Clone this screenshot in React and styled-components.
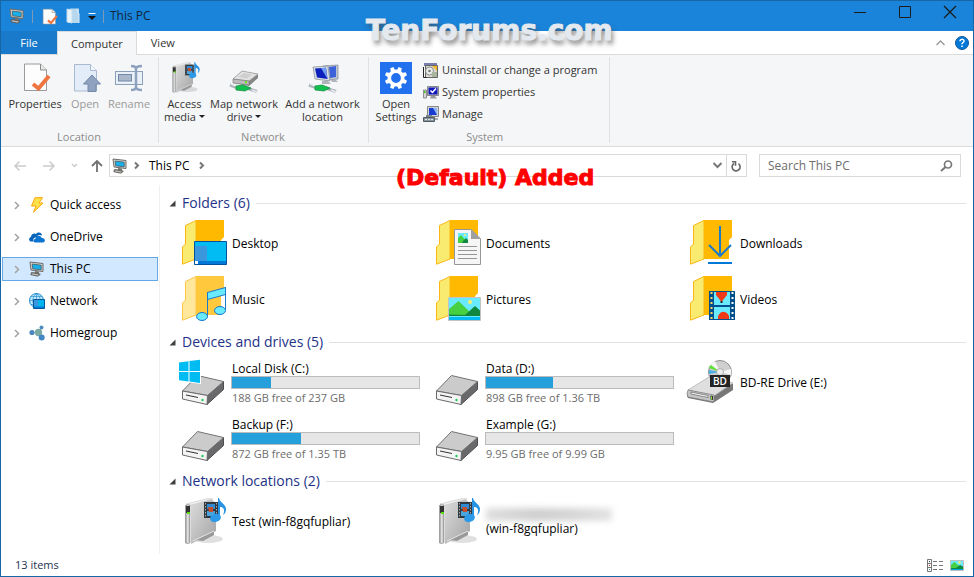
import React from "react";
import styled, { createGlobalStyle } from "styled-components";

const GlobalStyle = createGlobalStyle`
  * { box-sizing: border-box; }
  body { margin: 0; background: #fff; color: #000; font: 12px/16px "Open Sans", "Noto Sans", sans-serif; }
  button, input { font: inherit; color: inherit; background: none; border: 0; padding: 0; margin: 0; }
  a { color: inherit; text-decoration: none; }
  ul { list-style: none; margin: 0; padding: 0; }
  h1, h2 { margin: 0; font-weight: 400; }
  svg { display: block; flex: none; overflow: visible; }
`;

/* ---------- layout ---------- */

const Window = styled.div`
  position: relative;
  display: flex;
  flex-direction: column;
  min-height: 100vh;
  border: 1px solid #1766a6;
  background: #fff;
`;

const TitleBar = styled.header`
  display: flex;
  align-items: center;
  height: 30px;
  padding-left: 8px;
  background: #1a84da;
  color: #10263a;
`;

const QuickTools = styled.div`
  display: flex;
  align-items: center;
  gap: 7px;
`;

const IconButton = styled.button`
  display: grid;
  place-items: center;
  width: ${(p) => p.$w || 16}px;
  height: ${(p) => p.$h || 16}px;
  flex: none;
`;

const Divider = styled.span`
  width: 1px;
  height: 13px;
  background: #7d99b3;
`;

const WindowTitle = styled.h1`
  flex: 1;
  margin-left: 6px;
  font-size: 12px;
`;

const WindowControls = styled.div`
  display: flex;
  align-self: flex-start;
`;

const TabBar = styled.div`
  display: flex;
  height: 24px;
  font-size: 11px;
  border-bottom: 1px solid #dadbdc;
`;

const FileTab = styled.button`
  width: 56px;
  height: 23px;
  background: #1979ca;
  color: #fff;
`;

const Tab = styled.button`
  height: ${(p) => (p.$active ? 24 : 23)}px;
  padding: 0 13px;
  color: #333;
  border: 1px solid transparent;
  border-bottom: 0;
  ${(p) => p.$active && "background: #f5f6f7; border-color: #dadbdc;"}
`;

const TabTools = styled.div`
  display: flex;
  align-items: center;
  gap: 7px;
  margin-left: auto;
  padding-right: 4px;
`;

const Ribbon = styled.div`
  display: flex;
  height: 92px;
  padding: 2px 0 3px;
  background: #f5f6f7;
  border-bottom: 1px solid #dadbdc;
`;

const RibbonGroup = styled.section`
  display: flex;
  flex-direction: column;
  padding: 2px ${(p) => p.$end || 4}px 0 3px;
  border-right: 1px solid #e0e1e2;
`;

const GroupBody = styled.div`
  display: flex;
  flex: 1;
`;

const GroupLabel = styled.div`
  text-align: center;
  line-height: 12px;
  color: #8c8c8c;
  font-size: 11px;
`;

const LargeButton = styled.button`
  display: flex;
  flex-direction: column;
  align-items: center;
  width: ${(p) => p.$w}px;
  padding-top: 3px;
  gap: 3px;
  font-size: 11px;
  line-height: 13px;
  color: #333;
  white-space: nowrap;
  &:disabled { color: #9a9a9a; }
`;

const ButtonLine = styled.span`
  display: flex;
  align-items: center;
  justify-content: center;
  gap: 3px;
`;

const Caret = styled.span`
  border: 3px solid transparent;
  border-top-color: #222;
  border-bottom: 0;
`;

const SmallButtons = styled.div`
  display: flex;
  flex-direction: column;
  padding-left: 3px;
`;

const SmallButton = styled.button`
  display: flex;
  align-items: center;
  gap: 3px;
  height: 22px;
  font-size: 11px;
  color: #333;
  white-space: nowrap;
`;

const AddressRow = styled.div`
  display: flex;
  align-items: center;
  gap: 6px;
  padding: 7px 12px 8px 11px;
`;

const History = styled.div`
  display: flex;
  align-items: center;
  gap: 13px;
`;

const AddressBox = styled.div`
  display: flex;
  flex: 1;
  align-items: center;
  height: 23px;
  border: 1px solid #d9d9d9;
`;

const AddressPath = styled.div`
  display: flex;
  flex: 1;
  align-items: center;
  gap: 6px;
  padding-left: 2px;
`;

const PathButton = styled.button`
  padding: 0 3px;
`;

const RefreshCell = styled.div`
  display: flex;
  height: 21px;
  border-left: 1px solid #d9d9d9;
  align-items: center;
`;

const SearchBox = styled.form`
  display: flex;
  align-items: center;
  width: 202px;
  height: 23px;
  margin-left: 6px;
  padding: 0 6px 0 8px;
  border: 1px solid #d9d9d9;
`;

const SearchInput = styled.input`
  flex: 1;
  min-width: 0;
  outline: 0;
  &::placeholder { color: #6d6d6d; opacity: 1; }
`;

const Body = styled.div`
  display: flex;
  flex: 1;
`;

const NavPane = styled.nav`
  width: 159px;
  flex: none;
  padding: 8px 1px 0 1px;
  border-right: 1px solid #f0f0f0;
`;

const NavList = styled.ul`
  display: grid;
  gap: 8px;
`;

const NavLink = styled.a`
  display: flex;
  align-items: center;
  gap: 5px;
  height: 24px;
  padding-left: 11px;
  border: 1px solid ${(p) => (p.$active ? "#66a7e8" : "transparent")};
  background: ${(p) => (p.$active ? "#d1e8ff" : "transparent")};
`;

const NavIcon = styled.span`
  margin-left: 4px;
`;

const Content = styled.main`
  display: flex;
  flex-direction: column;
  flex: 1;
  gap: 1px;
  padding: 5px 7px 4px 9px;
`;

const SectionHeader = styled.button`
  display: flex;
  align-items: center;
  gap: 6px;
  width: 100%;
  height: 26px;
  font-size: 14px;
  color: #1e3287;
  &::after { content: ""; flex: 1; height: 1px; background: #e2e2e2; }
`;

const ItemGrid = styled.ul`
  display: grid;
  grid-template-columns: repeat(auto-fill, 254px);
  padding-left: 11px;
`;

const Item = styled.li`
  display: flex;
  align-items: center;
  gap: ${(p) => (p.$drive ? 3 : 4)}px;
  height: 56px;
`;

const DriveInfo = styled.div`
  display: grid;
`;

const DriveName = styled.label`
  padding-left: 1px;
  line-height: 15px;
`;

const DriveSpace = styled.span`
  padding-left: 1px;
  font-size: 11px;
  line-height: 17px;
  color: #6d6d6d;
`;

const UsageBar = styled.progress`
  appearance: none;
  display: block;
  width: 189px;
  height: 13px;
  border: 1px solid #bcbcbc;
  background: #e6e6e6;
  &::-webkit-progress-bar { background: #e6e6e6; }
  &::-webkit-progress-value { background: #26a0da; }
`;

const Location = styled.div`
  display: grid;
  line-height: 15px;
`;

const HiddenName = styled.span`
  width: 126px;
  height: 13px;
  background: linear-gradient(90deg, #dedede, #cfcfcf 40%, #d6d6d6 70%, #e4e4e4);
  filter: blur(3px);
`;

const StatusBar = styled.footer`
  display: flex;
  align-items: center;
  justify-content: space-between;
  height: 22px;
  padding: 0 8px 0 14px;
  font-size: 11px;
  color: #1e3250;
`;

const ViewButtons = styled.div`
  display: flex;
  gap: 6px;
`;

const Caption = styled.div`
  position: absolute;
  font-family: "DejaVu Sans", sans-serif;
  font-weight: 700;
  white-space: nowrap;
  pointer-events: none;
`;

const Watermark = styled(Caption)`
  top: 14px;
  left: 365px;
  font-size: 28px;
  line-height: 32px;
  color: #e3e9ee;
  -webkit-text-stroke: 1px #e3e9ee;
  text-shadow: 2px 4px 5px rgba(70, 70, 70, 0.7);
`;

const Notice = styled(Caption)`
  top: 163px;
  left: 395px;
  font-size: 22px;
  line-height: 28px;
  color: #f00;
  -webkit-text-stroke: 1px #f00;
`;

/* ---------- icons ---------- */

const PcIcon = () => (
  <svg width="16" height="16" viewBox="0 0 16 16">
    <path d="M1 1l13 1.500v8L2 9z" fill="#d8d4cc" stroke="#6b6a68" />
    <path d="M3.200 3l9 1.200v4.600l-8.500-1z" fill="#19b0ea" stroke="#3c5a6a" strokeWidth=".8" />
    <path d="M6 10l4 .6v2H6z" fill="#77746f" />
    <path d="M2.500 11.500l6 .8 2.800 1-2.500 1.900-7-1.500z" fill="#8b8984" stroke="#55534f" strokeWidth=".8" />
    <path d="M3 13l6 1" stroke="#ddd" strokeWidth=".7" />
  </svg>
);

const PropertiesIcon = ({ size = 32 }) => (
  <svg width={size} height={size} viewBox="0 0 32 32">
    <path d="M5.500 2h16l6 6v20.500h-22z" fill="#fdfdfd" stroke="#9a9a9a" />
    <path d="M21.500 2v6h6" fill="#e8e8e8" stroke="#8c8c8c" />
    <path d="M14 22l5.500 4.500L30 14" fill="none" stroke="#ee7440" strokeWidth="4" />
  </svg>
);

const OpenIcon = () => (
  <svg width="32" height="32" viewBox="0 0 32 32">
    <path d="M5.500 2.500h16l6 6V29h-22z" fill="#e3edf9" stroke="#a9bacf" />
    <path d="M21.500 2.500v6h6" fill="#f4f8fd" stroke="#a9bacf" />
    <path d="M23 13l8.500 9h-4.500v7.500h-8V22h-4.500z" fill="#8fa2bf" stroke="#7489a8" />
  </svg>
);

const RenameIcon = () => (
  <svg width="32" height="32" viewBox="0 0 32 32">
    <rect x="2.500" y="9.500" width="27" height="13" fill="#eaf0f8" stroke="#8c9fb9" />
    <rect x="5.500" y="12.500" width="13" height="6.500" fill="#a8b7cc" stroke="#7489a8" />
    <path d="M18 4c4 0 5 1 5 3v18c0 2-1 3-5 3M29 4c-4 0-6 1-6 3v18c0 2 2 3 6 3" fill="none" stroke="#8ea2bf" strokeWidth="2.500" />
  </svg>
);

const MediaServerIcon = ({ size = 48, id }) => (
  <svg width={size} height={size} viewBox="0 0 48 48">
    <defs>
      <linearGradient id={`${id}-case`} x1="0" y1="0" x2="1" y2="1">
        <stop offset="0" stopColor="#dcdcdc" />
        <stop offset="1" stopColor="#a3a3a3" />
      </linearGradient>
      <linearGradient id={`${id}-front`}>
        <stop offset="0" stopColor="#8e8e8e" />
        <stop offset=".5" stopColor="#e8e8e8" />
        <stop offset="1" stopColor="#a0a0a0" />
      </linearGradient>
    </defs>
    <ellipse cx="28" cy="41" rx="15" ry="4" fill="#000" opacity=".12" />
    <path d="M11 7L31 1l5 4v28L11 46z" fill={`url(#${id}-case)`} />
    <path d="M6 6L28 .5 33 1 10 7.500z" fill="#f1f1f1" stroke="#bbb" strokeWidth=".5" />
    <path d="M5.500 7.500Q6 6 10 7v37.500q-1 2-4.500.5z" fill={`url(#${id}-front)`} stroke="#888" strokeWidth=".6" />
    <path d="M6 8h4v7H6z" fill="#333" />
    <path d="M7 14h3v2H7z" fill="#59e00c" />
    <path d="M16 42l18-9v4L23 43z" fill="#999" />
    <path d="M13 43l21-10" stroke="#e4e4e4" />
    <rect x="24" y="4" width="14" height="16" fill="#303840" />
    <rect x="27" y="6" width="8" height="5" fill="#2f8bd4" />
    <rect x="27" y="13" width="8" height="5" fill="#4aa4dd" />
    <path d="M28 9h5v5h-4z" fill="#c54f2c" />
    <path d="M25.500 5v15M36.500 5v15" stroke="#aaa" strokeDasharray="1.500 1.500" />
    <path d="M38 0h1c1 5 7 6 7 11 0 3-1 5-3 6 3-7-1-8-3-8v11h-2z" fill="#2693e4" />
    <ellipse cx="35.500" cy="20" rx="5.500" ry="4" fill="#2d9ae8" transform="rotate(-15 35.500 20)" />
  </svg>
);

const Cable = () => (
  <g>
    <path d="M2 23l8 3 10 .5 9 3" fill="none" stroke="#a9b2b8" strokeWidth="3" />
    <path d="M3 22l5 2M24 28l5 2" stroke="#e8edf0" strokeWidth="1.500" />
    <path d="M8 24l7-1 8 3-6 3-9-1z" fill="#12c050" stroke="#0a8a38" strokeWidth=".7" />
  </g>
);

const MapDriveIcon = () => (
  <svg width="32" height="32" viewBox="0 0 32 32">
    <path d="M5 17l9-8 16 3v4l-9 8-16-3z" fill="#858585" />
    <path d="M5 17l9-8 16 3-9 7z" fill="#e2e2e2" stroke="#999" strokeWidth=".7" />
    <path d="M5 17l16 2v4L5 21z" fill="#bcbcbc" stroke="#777" strokeWidth=".6" />
    <path d="M10 15l6-4 8 1.500-5 4z" fill="#cfcfcf" />
    <path d="M17 19l2 .3v2l-2-.3z" fill="#6be410" />
    <Cable />
  </svg>
);

const AddLocationIcon = () => (
  <svg width="32" height="32" viewBox="0 0 32 32">
    <path d="M16 4l15-1v14l-11 1z" fill="#bfc6cf" stroke="#7f8790" strokeWidth=".7" />
    <path d="M22 5l7-1v11l-6 1z" fill="#3c61d8" />
    <path d="M6 5l15-1 2 15-15-2z" fill="#d8dde4" stroke="#7f8790" strokeWidth=".7" />
    <path d="M8 6.500l11-.8 1.500 11.300L10 15.500z" fill="#0d1fbc" />
    <path d="M14 6l5-.3 1.500 11.300z" fill="#6f9cf0" />
    <path d="M15 19h6l3 3h-9zM24 18h5l2 2h-6z" fill="#aeb4ba" />
    <Cable />
  </svg>
);

const SettingsIcon = () => (
  <svg width="32" height="32" viewBox="0 0 32 32">
    <path d="M0 0h32v32H0z" fill="#2170ee" />
    <circle cx="16" cy="16" r="6.700" fill="none" stroke="#fff" strokeWidth="3.600" />
    {[22.5, 67.5, 112.5, 157.5, 202.5, 247.5, 292.5, 337.5].map((a) => (
      <path key={a} d="M13.800 8.500l.5-3.700h3.400l.5 3.700z" fill="#fff" transform={`rotate(${a} 16 16)`} />
    ))}
  </svg>
);

const UninstallIcon = () => (
  <svg width="16" height="16" viewBox="0 0 16 16">
    <path d="M1 1h13v3H1z" fill="#7a7eae" />
    <path d="M2.500 3.500h12v12h-12z" fill="#d9d9d2" stroke="#666" />
    <path d="M9 4h5v5z" fill="#f2b92c" />
    <circle cx="6.500" cy="9" r="4" fill="#e9eee9" stroke="#777" strokeWidth=".8" />
    <circle cx="6.500" cy="9" r="1.300" fill="#777" />
    <path d="M9 10h5v5H9z" fill="#a7b59f" />
    <path d="M.5 5v10.500h3" fill="none" stroke="#222" />
  </svg>
);

const SystemIcon = () => (
  <svg width="16" height="16" viewBox="0 0 16 16">
    <path d="M.5 6h3v8h-3z" fill="#d5d5d5" stroke="#777" strokeWidth=".8" />
    <path d="M1 7h1.500v2H1z" fill="#45c421" />
    <path d="M4.500 2.500h11v9h-11z" fill="#c7c9cb" stroke="#888" />
    <path d="M5.500 3.500h9v7h-9z" fill="#1018bb" />
    <path d="M7.500 6.500l2 2 3.500-4" fill="none" stroke="#fff" strokeWidth="1.500" />
    <path d="M8 12h4l2 2.500H7z" fill="#999" />
  </svg>
);

const ManageIcon = () => (
  <svg width="16" height="16" viewBox="0 0 16 16">
    <path d="M4.500.5h11v10h-11z" fill="#d0d4d8" stroke="#888" />
    <path d="M6 2h8v7H6z" fill="#1a3bd0" />
    <path d="M10 2h4v7z" fill="#8bb4f4" />
    <path d="M3 9h6v2H3z" fill="#78848c" />
    <path d="M.5 11.500h11v4H.5z" fill="#87939a" stroke="#515b61" />
    <path d="M2 13.500h8" stroke="#dfe5e8" strokeDasharray="2 1" />
    <path d="M12 12h3v2h-3z" fill="#a9adb0" />
  </svg>
);

const Stroke = ({ d, w, h, color, width = 1 }) => (
  <svg width={w} height={h} viewBox={`0 0 ${w} ${h}`}>
    <path d={d} fill="none" stroke={color} strokeWidth={width} />
  </svg>
);

const ToolbarFolderIcon = () => (
  <svg width="14" height="16" viewBox="0 0 14 16">
    <path d="M4 .5h9V15H4z" fill="#b7d7ef" />
    <path d="M1 1l5 1v13l-5-1z" fill="#e8f3fb" stroke="#c4dcee" />
    <path d="M11 1l2 5v9" stroke="#dceaf5" fill="none" />
  </svg>
);

const HelpIcon = () => (
  <svg width="14" height="14" viewBox="0 0 14 14">
    <circle cx="7" cy="7" r="6.500" fill="#0078d7" stroke="#10589a" />
    <path d="M5 5.200C5 2.800 9 2.800 9 5c0 1.500-2 1.600-2 3.200M7 9.500v1.500" fill="none" stroke="#fff" strokeWidth="1.500" />
  </svg>
);

const QuickAccessIcon = () => (
  <svg width="16" height="16" viewBox="0 0 16 16">
    <path d="M6 .7h7.500L10 6h4L4.500 15.300 7 9H2.500z" fill="#ffe24a" stroke="#fba70b" strokeLinejoin="round" />
  </svg>
);

const CloudIcon = () => (
  <svg width="16" height="16" viewBox="0 0 16 16">
    <path d="M1.500 12.500C-.5 11-.2 8.500 2 8c0-3 3-4.500 5-3 2-2.500 6-1.500 6 1.500-3-1.500-5 0-5.500 2C4.500 8 3.500 11 5 12.500z" fill="#0864b8" />
    <path d="M6.500 13.500C4 13.500 4 10 6.500 9.800 6.500 6.500 11.500 5.500 12.700 9c4-.3 4 4.500 1.300 4.500z" fill="#0b74d1" />
  </svg>
);

const NetworkIcon = () => (
  <svg width="16" height="16" viewBox="0 0 16 16">
    <circle cx="7.500" cy="7.500" r="7" fill="#bfe8fb" stroke="#1b87cf" />
    <path d="M.5 7.500h14M7.500.5v14M2 3.500h11M2 11.500h6M7.500.5c-5 4-5 10 0 14M7.500.5c5 4 5 10 0 14" fill="none" stroke="#1b87cf" strokeWidth=".6" />
    <path d="M4.500 6.500h11v9h-11z" fill="#00b4ef" stroke="#05559b" />
    <path d="M5 7h4v6H5z" fill="#3a96dd" />
    <path d="M5 13.500h10v1.500H5z" fill="#0078d7" />
  </svg>
);

const HomegroupIcon = () => (
  <svg width="16" height="16" viewBox="0 0 16 16">
    <path d="M10 7l3-5M10 7l3 6" stroke="#9db6bd" />
    <circle cx="3" cy="7.500" r="2.600" fill="#4a87bd" />
    <circle cx="9.500" cy="7.500" r="3.700" fill="#7da9a4" />
    <circle cx="12.500" cy="2.500" r="2" fill="#4f8bbb" />
    <circle cx="12.700" cy="12.500" r="3" fill="#4386c4" />
  </svg>
);

const Folder = ({ back = "#ffb900", front = "#f9eb6f", edge = "#fbb615", children }) => (
  <svg width="48" height="48" viewBox="0 0 48 48">
    <path d="M16 0h28v17l-3 3v19H16z" fill={back} />
    <path d="M16 .5L5.500 5.500V24l-3 3v17.200L16 39z" fill={front} stroke={edge} />
    <path d="M16 0h2v39h-2z" fill={back} />
    {children}
  </svg>
);

const DesktopIcon = () => (
  <Folder>
    <path d="M14.500 21.500h32v23h-32z" fill="#00bcf2" stroke="#00539c" />
    <path d="M15 26h12v15H15z" fill="#3a96dd" />
    <path d="M15 41h31v3H15z" fill="#0078d7" />
    <path d="M15 41h3v3h-3z" fill="#fff" />
  </Folder>
);

const DocumentsIcon = () => (
  <Folder>
    <path d="M20.500 9.500h16.500l9.500 9.500v25.500h-26z" fill="#f6f6f6" stroke="#969696" />
    <path d="M37 9l10 10H37z" fill="#a0a0a0" />
    <path d="M24 13h10v10H24z" fill="#69eaff" />
    <path d="M24 18l3-3 7 8H24z" fill="#47d041" />
    <path d="M29 21l3-3 2 2v3h-6z" fill="#10893e" />
    <circle cx="31" cy="15" r="1" fill="#fff06a" />
    <path d="M24 26.500h19M24 30.500h19M24 34.500h19M24 38.500h19" stroke="#969696" />
  </Folder>
);

const DownloadsIcon = () => (
  <Folder>
    <path d="M32 6v30M21 25l11 11 11-11" fill="none" stroke="#1979ca" strokeWidth="2" />
    <path d="M20 42h24v2H20z" fill="#0078d7" />
  </Folder>
);

const MusicIcon = () => (
  <Folder back="#ffc83d" front="#ffe79b" edge="#ffc64a">
    <path d="M41 24h4v10h-4z" fill="#fff" />
    <path d="M27.500 16.500l18-5v7l-18 5z" fill="#69eaff" stroke="#1979ca" />
    <path d="M27.500 16v25M45.500 11v23" stroke="#1979ca" />
    <ellipse cx="22" cy="40.500" rx="5.500" ry="4" fill="#69eaff" stroke="#1979ca" />
    <ellipse cx="40" cy="34.500" rx="5.500" ry="4" fill="#69eaff" stroke="#1979ca" />
  </Folder>
);

const PicturesIcon = () => (
  <Folder>
    <path d="M14.500 21.500h32v23h-32z" fill="#69eaff" stroke="#c3c3c3" />
    <path d="M15 33l9.500-8L37 37v3H15z" fill="#47d041" />
    <path d="M31 39l10-9 5 4.500V40H15v-1.500z" fill="#10893e" />
    <path d="M15 41h31v3H15z" fill="#00bcf2" />
    <circle cx="36" cy="26" r="2" fill="#fff06a" />
  </Folder>
);

const VideosIcon = () => (
  <Folder>
    <path d="M21 15h26v29H21z" fill="#004e8c" />
    <path d="M26 16h16v13H26zM26 31h16v12H26z" fill="#69eaff" />
    <path d="M28 16h11v3l-5.500 7-5.500-7zM30 43v-3q4-7.500 10-2l1 2v3z" fill="#f03a17" />
    <path d="M32.500 25h2v2h-2z" fill="#222" />
    <path d="M23.500 16v27" stroke="#ffd75e" strokeWidth="2" strokeDasharray="2 3" />
    <path d="M44.500 16v27" stroke="#fff" strokeWidth="2" strokeDasharray="2 3" />
  </Folder>
);

const DriveIcon = ({ system }) => (
  <svg width="48" height="48" viewBox="0 0 48 48">
    <path d="M27.500 36.500l16-14v8l-16.500 15z" fill="#69696b" stroke="#4e4e50" />
    <path d="M2.500 32l15-15.500 26 6-16 14z" fill="#cbcbcb" stroke="#747474" />
    <path d="M2.500 32l25 4.500-.5 9-24.500-5.500z" fill="#f4f4f4" stroke="#6a6a6a" />
    <path d="M6 36l12 2.500" stroke="#333" />
    <circle cx="22.500" cy="41" r="1.200" fill="#1fcf5b" />
    {system && (
      <g>
        <path d="M-2 2.500L21 0v25l-23-3z" fill="#fff" />
        <path d="M-1 3.500l9.500-1.300V12H-1zM9.500 2L20 .7V12H9.500zM-1 13h9.500v9.500L-1 21.200zM9.500 13H20v11l-10.500-1.400z" fill="#00bcf2" />
      </g>
    )}
  </svg>
);

const BluRayIcon = () => (
  <svg width="48" height="48" viewBox="0 0 48 48">
    <circle cx="32" cy="13" r="11.500" fill="#cfcfcf" stroke="#8f8f8f" />
    <path d="M32 13L22 7a12 12 0 0 1 5-5zM32 13l11-3a12 12 0 0 1 0 6z" fill="#f5f5f5" />
    <path d="M32 13L21 9q1-2 2-3z" fill="#5fe03a" />
    <path d="M32 13L21 15v-4z" fill="#4cb0e8" />
    <circle cx="32" cy="13" r="3.500" fill="#ededed" stroke="#999" strokeWidth=".7" />
    <path d="M0 33l20-14 25 6v6L25 44 0 39q-2-3 0-6z" fill="#777" />
    <path d="M0 31l21-13 24 6-19 13z" fill="#dfdfdf" stroke="#a0a0a0" strokeWidth=".6" />
    <path d="M0 31l26 5v7L0 38q-2-3 0-7z" fill="#c5c5c5" stroke="#777" strokeWidth=".7" />
    <path d="M3 33l17 3.500v2L3 35z" fill="#f2f2f2" stroke="#555" strokeWidth=".6" />
    <path d="M22.500 36.500l2.500.5v4l-2.500-.5z" fill="#333" />
    <path d="M23.500 37.500v3" stroke="#8be82a" />
    <path d="M22 16h20v12H22z" fill="#242424" />
    <text x="32" y="25.500" textAnchor="middle" fontFamily="Open Sans, sans-serif" fontSize="10" fontWeight="600" fill="#fff">BD</text>
  </svg>
);

const DetailsViewIcon = () => (
  <svg width="16" height="13" viewBox="0 0 16 13">
    <path d="M.5.500h4v12h-4zM.5 4.500h4M.5 8.500h4M6 2.500h4M12 2.500h4M6 6.500h4M12 6.500h4M6 10.500h4M12 10.500h4" fill="none" stroke="#777" />
    <path d="M2 2h1v1H2z" fill="#333" />
    <path d="M2 6h1v1H2z" fill="#e03010" />
    <path d="M2 10h1v1H2z" fill="#1090e0" />
  </svg>
);

const TilesViewIcon = () => (
  <svg width="14" height="11" viewBox="0 0 14 11">
    <path d="M.5.500h13v10H.5z" fill="#69eaff" stroke="#c0c0c0" />
    <path d="M1 5l3.500-3L9 6v3H1z" fill="#47d041" />
    <path d="M6 8l4-3 3 1.500V9H1V8z" fill="#10893e" />
    <path d="M1 9h12v1H1z" fill="#00a8e0" />
    <circle cx="9.500" cy="2.500" r="1.300" fill="#fff06a" />
  </svg>
);

const SearchIcon = () => (
  <svg width="13" height="12" viewBox="0 0 13 12">
    <circle cx="8" cy="4.500" r="3.500" fill="none" stroke="#777" strokeWidth="1.700" />
    <path d="M5.500 7L1 11" stroke="#777" strokeWidth="2" />
  </svg>
);

const RefreshIcon = () => (
  <svg width="11" height="12" viewBox="0 0 11 12">
    <path d="M7.500 3.700A4 4 0 1 1 3 3.500M1 1.700h3.500v4" fill="none" stroke="#666" strokeWidth="1.600" />
  </svg>
);

const Triangle = () => (
  <svg width="7" height="7" viewBox="0 0 7 7">
    <path d="M6.500.500v6h-6z" fill="#404040" />
  </svg>
);

const Chevron = ({ color = "#777", width = 2, size = 7 }) => (
  <svg width="6" height={size} viewBox={`0 0 6 ${size}`}>
    <path d={`M1 ${size > 7 ? 1 : 0.5}l${size > 7 ? "3.500 3.500L1 8" : "3 3L1 6.500"}`} fill="none" stroke={color} strokeWidth={width} />
  </svg>
);

/* ---------- data ---------- */

const places = [
  { name: "Quick access", Icon: QuickAccessIcon },
  { name: "OneDrive", Icon: CloudIcon },
  { name: "This PC", Icon: PcIcon, active: true },
  { name: "Network", Icon: NetworkIcon },
  { name: "Homegroup", Icon: HomegroupIcon },
];

const folders = [
  { name: "Desktop", Icon: DesktopIcon },
  { name: "Documents", Icon: DocumentsIcon },
  { name: "Downloads", Icon: DownloadsIcon },
  { name: "Music", Icon: MusicIcon },
  { name: "Pictures", Icon: PicturesIcon },
  { name: "Videos", Icon: VideosIcon },
];

const drives = [
  { id: "c", name: "Local Disk (C:)", space: "188 GB free of 237 GB", used: 21, system: true },
  { id: "d", name: "Data (D:)", space: "898 GB free of 1.36 TB", used: 36 },
  { id: "e", name: "BD-RE Drive (E:)", optical: true },
  { id: "f", name: "Backup (F:)", space: "872 GB free of 1.35 TB", used: 37 },
  { id: "g", name: "Example (G:)", space: "9.95 GB free of 9.99 GB", used: 0 },
];

const Section = ({ title, children }) => (
  <section>
    <h2>
      <SectionHeader type="button" aria-expanded="true">
        <Triangle />
        {title}
      </SectionHeader>
    </h2>
    <ItemGrid>{children}</ItemGrid>
  </section>
);

const Drive = ({ drive }) =>
  drive.optical ? (
    <Item>
      <BluRayIcon />
      {drive.name}
    </Item>
  ) : (
    <Item $drive>
      <DriveIcon system={drive.system} />
      <DriveInfo>
        <DriveName htmlFor={`drive-${drive.id}`}>{drive.name}</DriveName>
        <UsageBar id={`drive-${drive.id}`} max="100" value={drive.used} />
        <DriveSpace>{drive.space}</DriveSpace>
      </DriveInfo>
    </Item>
  );

export default function App() {
  return (
    <Window>
      <GlobalStyle />
      <TitleBar>
        <QuickTools>
          <PcIcon />
          <Divider />
          <IconButton $w={18} aria-label="Properties"><PropertiesIcon size={18} /></IconButton>
          <IconButton aria-label="New folder"><ToolbarFolderIcon /></IconButton>
          <IconButton $w={8} aria-label="Customize toolbar">
            <svg width="8" height="7" viewBox="0 0 8 7">
              <path d="M.5 0h7v1h-7z" fill="#fff" />
              <path d="M0 3h8L4 7z" fill="#111" />
            </svg>
          </IconButton>
          <Divider />
        </QuickTools>
        <WindowTitle>This PC</WindowTitle>
        <WindowControls>
          <IconButton $w={46} $h={22} aria-label="Minimize">
            <Stroke w={12} h={12} d="M0 6.500h12" color="#1c1c1c" />
          </IconButton>
          <IconButton $w={44} $h={22} aria-label="Maximize">
            <Stroke w={12} h={12} d="M.5.500h11v11H.5z" color="#1c1c1c" />
          </IconButton>
          <IconButton $w={46} $h={22} aria-label="Close">
            <Stroke w={12} h={12} d="M0 0l12 12M12 0L0 12" color="#1c1c1c" width={1.3} />
          </IconButton>
        </WindowControls>
      </TitleBar>

      <TabBar role="tablist">
        <FileTab>File</FileTab>
        <Tab $active role="tab" aria-selected="true">Computer</Tab>
        <Tab role="tab" aria-selected="false">View</Tab>
        <TabTools>
          <IconButton aria-label="Collapse ribbon">
            <Stroke w={9} h={6} d="M.5 5l4-4 4 4" color="#999" width={1.4} />
          </IconButton>
          <IconButton $w={14} aria-label="Help"><HelpIcon /></IconButton>
        </TabTools>
      </TabBar>

      <Ribbon>
        <RibbonGroup>
          <GroupBody>
            <LargeButton $w={62}><PropertiesIcon />Properties</LargeButton>
            <LargeButton $w={38} disabled><OpenIcon />Open</LargeButton>
            <LargeButton $w={50} disabled><RenameIcon />Rename</LargeButton>
          </GroupBody>
          <GroupLabel>Location</GroupLabel>
        </RibbonGroup>
        <RibbonGroup>
          <GroupBody>
            <LargeButton $w={45}>
              <MediaServerIcon size={32} id="access" />
              <span>
                <ButtonLine>Access</ButtonLine>
                <ButtonLine>media<Caret /></ButtonLine>
              </span>
            </LargeButton>
            <LargeButton $w={74}>
              <MapDriveIcon />
              <span>
                <ButtonLine>Map network</ButtonLine>
                <ButtonLine>drive<Caret /></ButtonLine>
              </span>
            </LargeButton>
            <LargeButton $w={83}>
              <AddLocationIcon />
              <span>
                <ButtonLine>Add a network</ButtonLine>
                <ButtonLine>location</ButtonLine>
              </span>
            </LargeButton>
          </GroupBody>
          <GroupLabel>Network</GroupLabel>
        </RibbonGroup>
        <RibbonGroup $end={12}>
          <GroupBody>
            <LargeButton $w={48}>
              <SettingsIcon />
              <span>
                <ButtonLine>Open</ButtonLine>
                <ButtonLine>Settings</ButtonLine>
              </span>
            </LargeButton>
            <SmallButtons>
              <SmallButton><UninstallIcon />Uninstall or change a program</SmallButton>
              <SmallButton><SystemIcon />System properties</SmallButton>
              <SmallButton><ManageIcon />Manage</SmallButton>
            </SmallButtons>
          </GroupBody>
          <GroupLabel>System</GroupLabel>
        </RibbonGroup>
      </Ribbon>

      <AddressRow>
        <AddressBar />
        <SearchBox role="search">
          <SearchInput type="text" placeholder="Search This PC" aria-label="Search This PC" />
          <IconButton type="button" aria-label="Search"><SearchIcon /></IconButton>
        </SearchBox>
      </AddressRow>

      <Body>
        <NavPane>
          <NavList>
            {places.map(({ name, Icon, active }) => (
              <li key={name}>
                <NavLink href="#" $active={active}>
                  <Chevron color="#a6a6a6" width={1.6} size={9} />
                  <NavIcon><Icon /></NavIcon>
                  {name}
                </NavLink>
              </li>
            ))}
          </NavList>
        </NavPane>
        <Content>
          <Section title="Folders (6)">
            {folders.map(({ name, Icon }) => (
              <Item key={name}><Icon />{name}</Item>
            ))}
          </Section>
          <Section title="Devices and drives (5)">
            {drives.map((drive) => <Drive key={drive.id} drive={drive} />)}
          </Section>
          <Section title="Network locations (2)">
            <Item><MediaServerIcon id="test" />Test (win-f8gqfupliar)</Item>
            <Item>
              <MediaServerIcon id="shared" />
              <Location>
                <HiddenName />
                (win-f8gqfupliar)
              </Location>
            </Item>
          </Section>
        </Content>
      </Body>

      <StatusBar>
        <span>13 items</span>
        <ViewButtons>
          <IconButton aria-label="Details view"><DetailsViewIcon /></IconButton>
          <IconButton aria-label="Large icons view"><TilesViewIcon /></IconButton>
        </ViewButtons>
      </StatusBar>

      <Watermark>TenForums.com</Watermark>
      <Notice>(Default) Added</Notice>
    </Window>
  );
}

function AddressBar() {
  return (
    <>
      <History>
        <IconButton aria-label="Back">
          <Stroke w={12} h={10} d="M12 5H1M5.500.500L1 5l4.500 4.500" color="#ccc" width={1.5} />
        </IconButton>
        <IconButton aria-label="Forward">
          <Stroke w={12} h={10} d="M0 5h11M6.500.500L11 5 6.500 9.500" color="#ccc" width={1.5} />
        </IconButton>
        <IconButton $w={8} aria-label="Recent locations">
          <Stroke w={7} h={5} d="M1 1l2.500 2.500L6 1" color="#ccc" width={1.5} />
        </IconButton>
        <IconButton $w={12} aria-label="Up">
          <Stroke w={12} h={12} d="M6 12V1M1 6l5-5 5 5" color="#707070" width={1.8} />
        </IconButton>
      </History>
      <AddressBox>
        <AddressPath>
          <PcIcon />
          <Chevron />
          <PathButton type="button">This PC</PathButton>
          <Chevron />
        </AddressPath>
        <IconButton $w={18} aria-label="Previous locations">
          <Stroke w={9} h={7} d="M.5 1l4 4 4-4" color="#777" width={2} />
        </IconButton>
        <RefreshCell>
          <IconButton $w={19} aria-label="Refresh"><RefreshIcon /></IconButton>
        </RefreshCell>
      </AddressBox>
    </>
  );
}
